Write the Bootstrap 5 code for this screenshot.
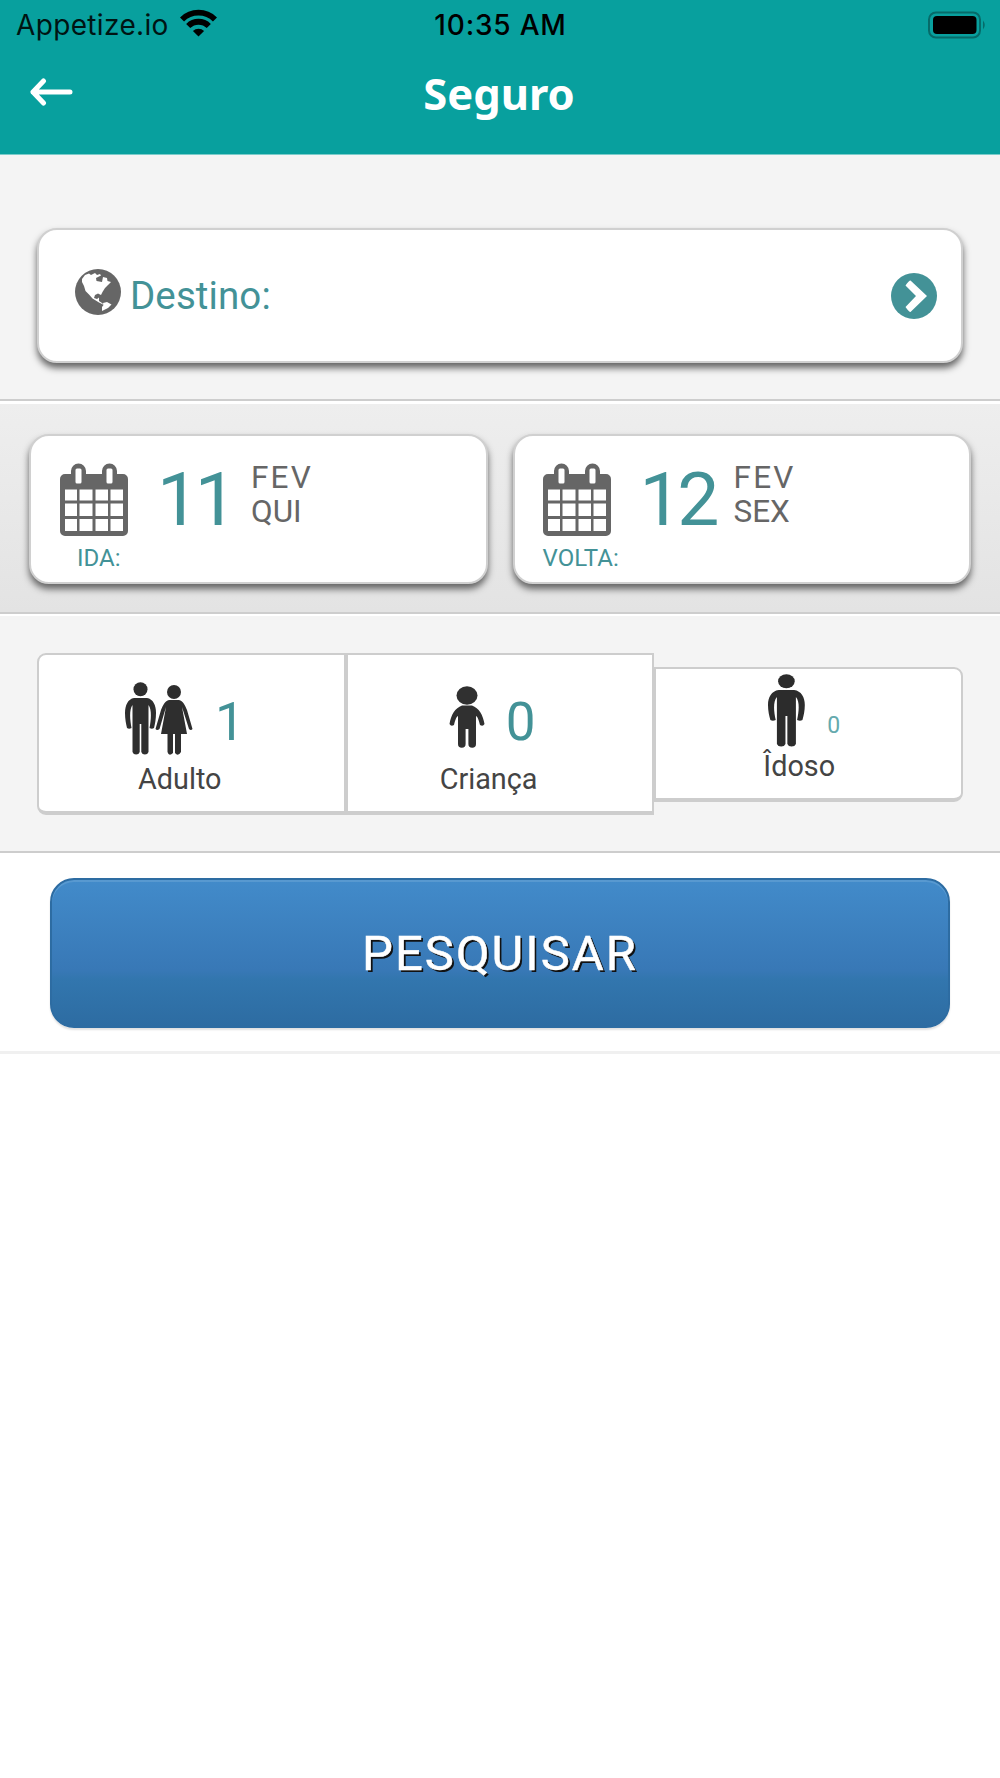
<!DOCTYPE html>
<html lang="pt-BR">
<head>
<meta charset="utf-8">
<meta name="viewport" content="width=device-width, initial-scale=1">
<title>Seguro</title>
<link href="https://cdn.jsdelivr.net/npm/bootstrap@5.3.0/dist/css/bootstrap.min.css" rel="stylesheet">
<style>
:root{--teal:#439297;--line:#cdcdcd;--ink:#666}
body{font-family:Roboto,sans-serif;background:#fff;color:#444;line-height:1}
svg{display:block;flex:none}
.app-top{height:155px;background:#08a09e;border-bottom:1px solid #7accca}
.status{height:50px;font:28px/50px Inter,sans-serif;color:#001413;padding:0 13px 0 16px}
.status>*{flex:1 1 0}
.carrier{letter-spacing:.35px;gap:11px}
.clock{font-weight:500;letter-spacing:.8px;color:#000;text-indent:-2px}
.titlebar{height:87px;padding:0 30px;color:#fff}
.titlebar>*{flex:1 1 0}
.titlebar h1{font:bold 43.5px/87px "Noto Sans",sans-serif;margin:0 2px 0 0}
.sec{border-bottom:2px solid var(--line);background:#f4f4f4}
.dest-sec{height:246px;padding:73px 37px 0}
.raised{border:2px solid #d0d0d0;border-radius:20px;background:#fff;box-shadow:0 5px 7px #646464}
.dest{height:135px;padding:0 24px 0 36px;color:var(--teal)}
.dest-label{font-size:38.5px;letter-spacing:.1px;line-height:46px;margin:1px 0 0 9px}
.dates{height:213px;padding:30px 29px 0;border-top:3px solid #fff;background:linear-gradient(#eee,#e3e3e3);gap:25px}
.date-card{height:150px;padding:27px 0 0 29px}
.date-card.back{padding-left:28px}
.cal-col{width:68px}
.cal-label{font-size:24px;line-height:28px;color:var(--teal);margin-top:7px;white-space:nowrap}
.cal-label.out{padding-left:17px}
.day{font-size:75px;line-height:75px;letter-spacing:-4.300px;color:var(--teal);margin:-1px 0 0 29px;width:94px}
.mon{font-size:31.5px;line-height:34px;color:var(--ink);margin-top:-2px}
.mon-name{letter-spacing:2.200px}
.pax-sec{height:239px;border-top:2px solid #fff;padding:37px 37px 0}
.pax{border:2px solid var(--line);border-bottom-width:4px;background:#fff;height:162px;width:309px;font-size:28.8px;color:#444}
.pax.first{border-radius:9px 0 0 9px}
.pax.last{height:135px;margin-top:14px;border-radius:0 9px 9px 0}
.pax-row{height:100px;padding:27px 0 0 86px}
.pax-row.kid{padding:31px 0 0 101px}
.pax-row.elder{height:79px;padding:5px 0 0 112px}
.qty{font-size:53px;line-height:60px;color:var(--teal);margin:10px 0 0 22px}
.kid .qty{margin:6px 0 0 21px}
.qty-sm{font-size:23px;line-height:28px;color:#65aaae;margin:38px 0 0 21px}
.pax-label{line-height:34px;padding:7px 0 0 99px}
.pax-label.kid{padding-left:92px}
.pax-label.elder{padding:1px 0 0 107px}
.go-sec{height:201px;padding:25px 50px 0;border-bottom:3px solid #f0f0f0}
.btn-go{height:150px;border:2px solid #2d6ca2;border-color:#2d6ca2;border-radius:24px;background:linear-gradient(#428bca,#3878b6 62%,#3276ae 68%,#2d6ca2);box-shadow:inset 0 2px 0 #5899d0,0 2px 2px rgba(0,0,0,.12);color:#fff!important;font-size:49px;font-weight:400;letter-spacing:2px;line-height:1;text-shadow:2px 2px 0 #111;-webkit-text-stroke:.5px #fff}
</style>
</head>
<body>
<svg width="0" height="0" class="position-absolute" aria-hidden="true">
  <defs>
    <symbol id="calendar" viewBox="0 0 68 74">
      <path fill="#666" fill-rule="evenodd" d="M5 11H11V8a7.500 7.500 0 0 1 15 0v3H42V8a7.500 7.500 0 0 1 15 0v3H63a5 5 0 0 1 5 5V68a5 5 0 0 1-5 5H5a5 5 0 0 1-5-5V16a5 5 0 0 1 5-5ZM5 26.500V37.500H17V26.500ZM19.500 26.500V37.500H32.500V26.500ZM35.500 26.500V37.500H48V26.500ZM50.500 26.500V37.500H63V26.500ZM5 40.500V53H17V40.500ZM19.500 40.500V53H32.500V40.500ZM35.500 40.500V53H48V40.500ZM50.500 40.500V53H63V40.500ZM5 56V68H17V56ZM19.500 56V68H32.500V56ZM35.500 56V68H48V56ZM50.500 56V68H63V56Z"/>
      <rect x="15.500" y="5.500" width="6" height="15" rx="1.500" fill="#fff"/><rect x="46.500" y="5.500" width="6" height="15" rx="1.500" fill="#fff"/>
    </symbol>
    <symbol id="man" viewBox="0 0 32 74" preserveAspectRatio="none">
      <circle cx="15.500" cy="7.200" r="7"/>
      <path d="M9 16H22C28 17 31 23 31 31C31 37 30 42 29 46Q27 47.500 24.500 46C26 38 27 28 23.500 23V70A3.800 3.800 0 0 1 16.300 70V42H14.700V70A3.800 3.800 0 0 1 7.500 70V23C4 28 5 38 6.500 46Q4 47.500 2 46C1 42 0 37 0 31C0 23 3 17 9 16Z"/>
    </symbol>
  </defs>
</svg>

<header class="app-top">
  <div class="status d-flex align-items-center">
    <div class="carrier d-flex align-items-center"><span>Appetize.io</span>
      <svg width="37" height="28" viewBox="0 0 37 28" fill="none" stroke="#000" stroke-width="5.800" class="mb-1"><path d="M2 10.500a23.300 23.300 0 0 1 33 0M8.200 17a14.600 14.600 0 0 1 20.600 0"/><path fill="#000" stroke="none" d="M18.500 27.500L12.900 22a8.200 8.200 0 0 1 11.200 0Z"/></svg>
    </div>
    <div class="clock text-center">10:35 AM</div>
    <div class="d-flex justify-content-end"><svg width="60" height="28" viewBox="0 0 60 28"><rect x="2" y="1.500" width="51" height="25" rx="7" fill="none" stroke="#066b69" stroke-width="2"/><rect x="6" y="5" width="43.500" height="18" rx="4" fill="#000"/><path d="M56 9.500Q59.500 14 56 18.500Z" fill="#066b69"/></svg></div>
  </div>
  <div class="titlebar d-flex align-items-center">
    <div><svg width="43" height="28" viewBox="0 0 43 28" fill="none" stroke="#fff" stroke-width="5" stroke-linecap="round" stroke-linejoin="round" class="mb-1"><path d="M40 14H3M13.500 3L3 14L13.500 25"/></svg></div>
    <h1 class="text-center">Seguro</h1>
    <div></div>
  </div>
</header>

<main>
  <section class="sec dest-sec">
    <div class="raised dest d-flex align-items-center">
      <svg width="46" height="46" viewBox="0 0 46 46" class="mb-2"><circle cx="23" cy="23" r="23" fill="#666"/><path fill="#fff" d="M7 10L10 6L14 4.500L16 6L20 4L22 6L25 5L26 6.500L21 9L21.500 12L27 13L28 8L32 9L32.500 12L36 13L33 16L30 19L27.500 23L26 26L23 24.500L20 26L19 29L22 30L24 28.500L24 32L27 34L29 36L24 33.500L17.500 29.500L14 25.500L10.500 22L9 17L7 13ZM28 34L32 33L36.500 35.500L33 39L27 42L27 38L28.500 36Z"/></svg>
      <span class="dest-label">Destino:</span>
      <svg class="ms-auto" width="46" height="46" viewBox="0 0 46 46"><circle cx="23" cy="23" r="23" fill="#439297"/><path d="M19.500 7.500L36 23L19.500 39Q18 39 14.500 34L25 23L14.500 12.500Q18 7.500 19.500 7.500Z" fill="#fff"/></svg>
    </div>
  </section>

  <section class="sec dates d-flex">
    <div class="raised date-card d-flex flex-fill w-50">
      <div class="cal-col"><svg width="68" height="74"><use href="#calendar"/></svg><div class="cal-label out">IDA:</div></div>
      <div class="day">11</div>
      <div class="mon"><div class="mon-name">FEV</div><div>QUI</div></div>
    </div>
    <div class="raised date-card back d-flex flex-fill w-50">
      <div class="cal-col"><svg width="68" height="74"><use href="#calendar"/></svg><div class="cal-label">VOLTA:</div></div>
      <div class="day">12</div>
      <div class="mon"><div class="mon-name">FEV</div><div>SEX</div></div>
    </div>
  </section>

  <section class="sec pax-sec d-flex">
    <div class="pax first">
      <div class="pax-row d-flex">
        <svg width="68" height="74" viewBox="0 0 68 74" fill="#2e2e2e"><use href="#man" width="32" height="74"/><circle cx="49" cy="10" r="7"/><path d="M44 18H54C58 19 60 23 62 28L67.500 47Q66 49 64 47L57 25L62 52H56V70Q53 75 50 71V52H48V71Q44 75 42.500 70V52H36L41 25L34.500 47Q32 49 30.500 47L36 28C38 23 40 19 44 18Z"/></svg>
        <span class="qty">1</span>
      </div>
      <div class="pax-label">Adulto</div>
    </div>
    <div class="pax">
      <div class="pax-row kid d-flex">
        <svg width="36" height="62" viewBox="0 0 36 62" fill="#303030"><ellipse cx="18" cy="9.500" rx="10.500" ry="9.300"/><path d="M13 19.500H23C30 22 34 29 35.500 38Q34 41 31 39C30 35 29 31 27 30V58A3.800 3.800 0 0 1 19.400 58V43H16.600V58A3.800 3.800 0 0 1 9 58V30C7 31 6 35 5 39Q2 41 .5 38C2 29 6 22 13 19.500Z"/></svg>
        <span class="qty">0</span>
      </div>
      <div class="pax-label kid">Criança</div>
    </div>
    <div class="pax last">
      <div class="pax-row elder d-flex">
        <svg width="38" height="74" fill="#2c2c2c"><use href="#man" width="38" height="74"/></svg>
        <span class="qty-sm">0</span>
      </div>
      <div class="pax-label elder">Îdoso</div>
    </div>
  </section>

  <section class="go-sec">
    <button type="button" class="btn btn-primary btn-go w-100">PESQUISAR</button>
  </section>
</main>
<script src="https://cdn.jsdelivr.net/npm/bootstrap@5.3.0/dist/js/bootstrap.bundle.min.js"></script>
</body>
</html>
